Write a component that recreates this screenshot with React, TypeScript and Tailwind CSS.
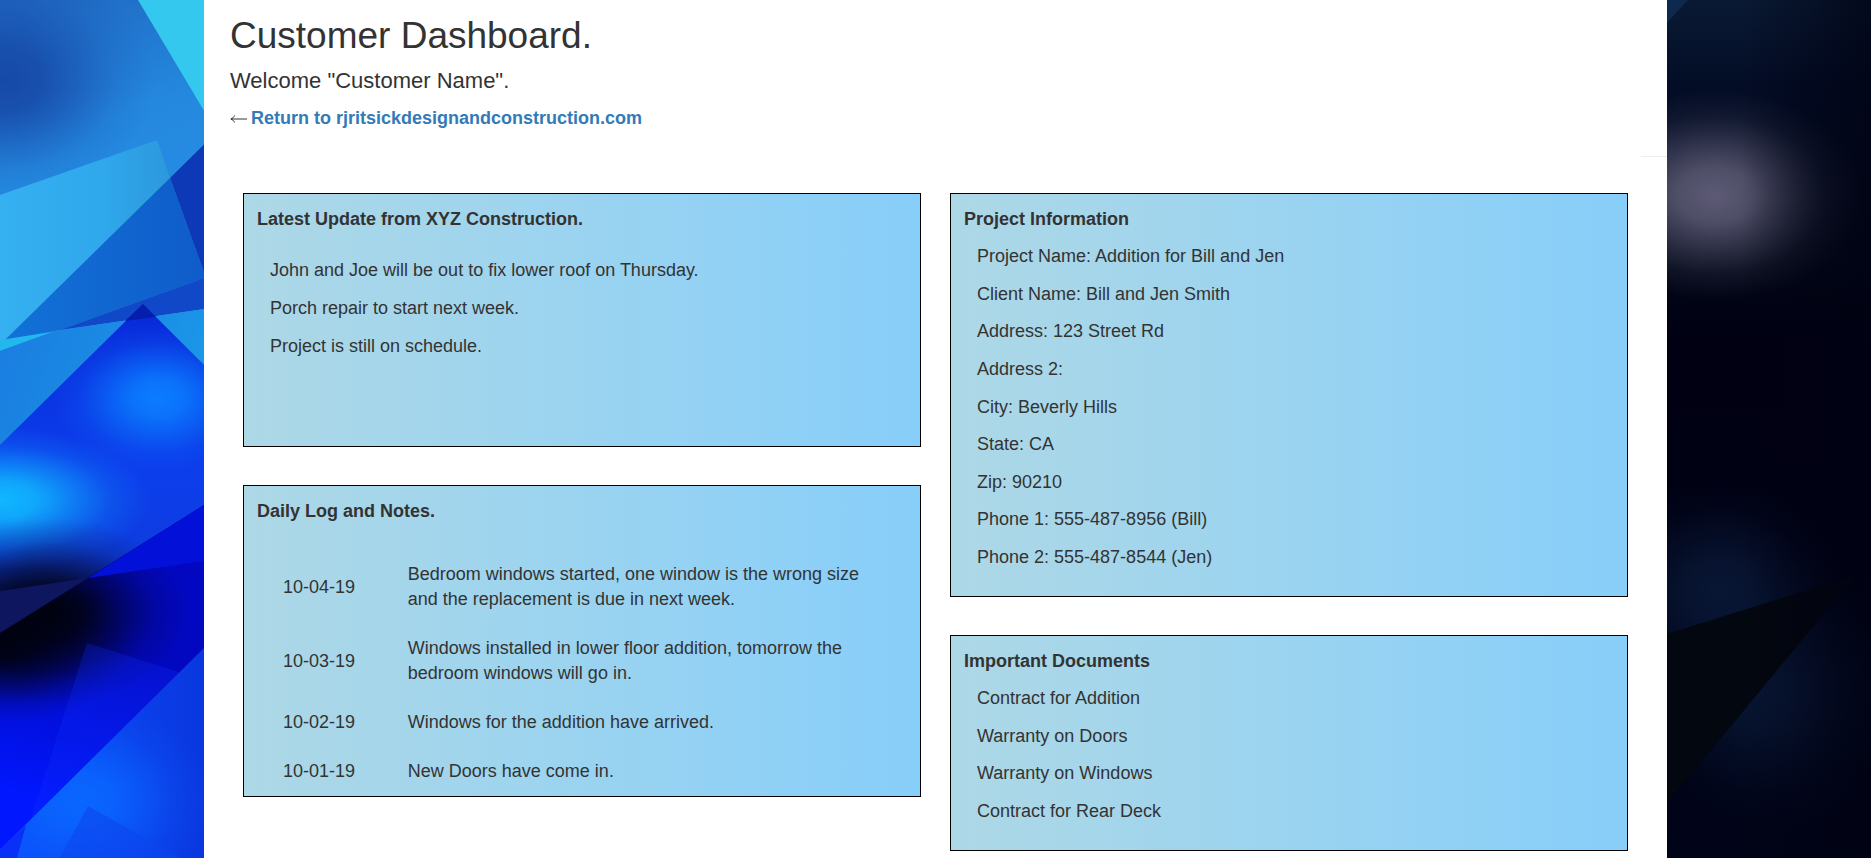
import type { ReactNode } from "react";

const updates = [
  "John and Joe will be out to fix lower roof on Thursday.",
  "Porch repair to start next week.",
  "Project is still on schedule.",
];

const dailyLog = [
  {
    date: "10-04-19",
    note: "Bedroom windows started, one window is the wrong size and the replacement is due in next week.",
  },
  {
    date: "10-03-19",
    note: "Windows installed in lower floor addition, tomorrow the bedroom windows will go in.",
  },
  { date: "10-02-19", note: "Windows for the addition have arrived." },
  { date: "10-01-19", note: "New Doors have come in." },
];

const projectInfo = [
  "Project Name: Addition for Bill and Jen",
  "Client Name: Bill and Jen Smith",
  "Address: 123 Street Rd",
  "Address 2:",
  "City: Beverly Hills",
  "State: CA",
  "Zip: 90210",
  "Phone 1: 555-487-8956 (Bill)",
  "Phone 2: 555-487-8544 (Jen)",
];

const documents = [
  "Contract for Addition",
  "Warranty on Doors",
  "Warranty on Windows",
  "Contract for Rear Deck",
];

// Radial glow stops shared by the backdrop
const Glow = ({ id, color }: { id: string; color: string }) => (
  <radialGradient id={id}>
    <stop offset="0" stopColor={color} />
    <stop offset="0.25" stopColor={color} stopOpacity="0.86" />
    <stop offset="0.5" stopColor={color} stopOpacity="0.5" />
    <stop offset="0.75" stopColor={color} stopOpacity="0.16" />
    <stop offset="1" stopColor={color} stopOpacity="0" />
  </radialGradient>
);

const Backdrop = () => (
  <svg
    className="absolute inset-0 h-full w-full"
    viewBox="0 0 1871 858"
    preserveAspectRatio="none"
    aria-hidden="true"
  >
    <defs>
      <Glow id="navy" color="#1749a8" />
      <Glow id="sky" color="#0b7cff" />
      <Glow id="cyan" color="#10b8ff" />
      <Glow id="black" color="#00020f" />
      <Glow id="bright" color="#0a66ff" />
      <Glow id="grey" color="#5c5a74" />
      <Glow id="midnight" color="#081634" />
      <linearGradient id="top" x1="0" y1="0" x2="0.3" y2="1">
        <stop offset="0" stopColor="#1f66c0" />
        <stop offset="0.4" stopColor="#2488de" />
        <stop offset="1" stopColor="#2892ea" />
      </linearGradient>
      <linearGradient id="pane" x1="0" y1="0" x2="1" y2="0">
        <stop offset="0" stopColor="#35b0f0" />
        <stop offset="0.6" stopColor="#30a8ec" />
        <stop offset="1" stopColor="#2c98dc" />
      </linearGradient>
      <linearGradient id="mid" x1="0" y1="0" x2="1" y2="0">
        <stop offset="0" stopColor="#1272d6" />
        <stop offset="1" stopColor="#0f5cca" />
      </linearGradient>
      <linearGradient id="shard" x1="0" y1="0" x2="1" y2="0.2">
        <stop offset="0" stopColor="#1a7ce0" />
        <stop offset="1" stopColor="#1ba0ea" />
      </linearGradient>
      <linearGradient id="royal" x1="0" y1="0" x2="0" y2="1">
        <stop offset="0" stopColor="#0828d8" />
        <stop offset="0.5" stopColor="#0c3eec" />
        <stop offset="0.75" stopColor="#0e3ce0" />
        <stop offset="1" stopColor="#0e1f96" />
      </linearGradient>
      <linearGradient id="deep" x1="0.2" y1="0" x2="0" y2="1">
        <stop offset="0" stopColor="#0208c4" />
        <stop offset="0.45" stopColor="#0208c0" />
        <stop offset="0.85" stopColor="#0118ff" />
      </linearGradient>
      <linearGradient id="corner" x1="0" y1="0" x2="1" y2="0">
        <stop offset="0" stopColor="#0a50ff" />
        <stop offset="0.66" stopColor="#0a38e0" />
        <stop offset="1" stopColor="#0a34dc" />
      </linearGradient>
      <linearGradient id="night" x1="0" y1="0" x2="0" y2="1">
        <stop offset="0" stopColor="#0a1a34" />
        <stop offset="0.1" stopColor="#030d26" />
        <stop offset="0.3" stopColor="#020818" />
        <stop offset="0.4" stopColor="#000012" />
        <stop offset="1" stopColor="#000418" />
      </linearGradient>
      <linearGradient id="fade" x1="0" y1="0" x2="1" y2="0">
        <stop offset="0" stopColor="#000212" stopOpacity="0" />
        <stop offset="1" stopColor="#000212" stopOpacity="0.7" />
      </linearGradient>
      <clipPath id="leftBand">
        <rect width="300" height="858" />
      </clipPath>
      <clipPath id="royalClip">
        <polygon points="0,445 143,304 204,365 300,461 300,445 0,633" />
      </clipPath>
      <clipPath id="cornerClip">
        <polygon points="0,850 204,648 300,553 300,858 0,858" />
      </clipPath>
    </defs>

    {/* Left side */}
    <g clipPath="url(#leftBand)">
      <rect width="300" height="360" fill="url(#top)" />
      <ellipse cx="5" cy="80" rx="150" ry="120" fill="url(#navy)" />
      <polygon points="138,0 300,0 300,272" fill="#35c8ee" />
      <polygon points="0,195 157,140 170,178 5,340 0,340" fill="url(#pane)" />
      <polygon points="170,178 300,50 300,540" fill="#0d38b6" />
      <polygon points="170,178 204,272 204,278 60,330 5,340" fill="url(#mid)" />
      <polygon points="204,278 300,243 300,295 60,330" fill="#1148c8" />
      <polygon points="0,340 52,332 0,351" fill="#22b8ee" />
      <polygon points="0,351 55,331 204,309 300,295 300,460 0,460" fill="url(#shard)" />
      <g clipPath="url(#royalClip)">
        <rect y="300" width="300" height="340" fill="url(#royal)" />
        <ellipse cx="158" cy="398" rx="105" ry="75" fill="url(#sky)" />
        <ellipse cx="0" cy="500" rx="150" ry="72" fill="url(#cyan)" />
      </g>
      <polygon points="143,304 125,321 156,317" fill="#041eae" />
      <polygon points="0,633 204,505 300,445 300,858 0,858" fill="url(#deep)" />
      <ellipse cx="50" cy="612" rx="140" ry="95" fill="url(#black)" />
      <ellipse cx="0" cy="640" rx="130" ry="85" fill="url(#black)" />
      <polygon points="88,578 204,505 204,561" fill="#0210d8" />
      <polygon points="0,591 88,578 0,633" fill="#0d165e" />
      <polygon points="87,643 204,680 204,858 18,858" fill="#1030ff" opacity="0.25" />
      <g clipPath="url(#cornerClip)">
        <rect y="553" width="300" height="305" fill="url(#corner)" />
        <ellipse cx="80" cy="800" rx="130" ry="100" fill="url(#bright)" />
        <polygon points="0,850 26,825 17,858 0,858" fill="#0a30f8" />
        <polygon points="88,806 180,858 60,858" fill="#0c46ee" opacity="0.6" />
      </g>
    </g>

    {/* Right side */}
    <rect x="1600" width="271" height="858" fill="url(#night)" />
    <polygon points="1600,0 1688,0 1600,95" fill="#0f284e" />
    <ellipse cx="1715" cy="195" rx="150" ry="105" fill="url(#grey)" />
    <ellipse cx="1720" cy="590" rx="130" ry="110" fill="url(#midnight)" />
    <ellipse cx="1775" cy="690" rx="150" ry="140" fill="url(#midnight)" />
    <polygon points="1600,654 1667,634 1856,575 1667,803 1600,880" fill="#03070f" />
    <rect x="1740" width="131" height="858" fill="url(#fade)" />
  </svg>
);

const Card = ({
  title,
  className = "",
  children,
}: {
  title: string;
  className?: string;
  children: ReactNode;
}) => (
  <section
    className={`flex flex-col border border-black bg-linear-to-r from-[#add8e6] to-[#87cefa] px-[13px] pt-[13px] ${className}`}
  >
    <h3 className="font-bold">{title}</h3>
    {children}
  </section>
);

const App = () => {
  return (
    <div className="relative min-h-screen bg-[#000418] font-['Liberation_Sans',Arial,sans-serif] text-[18px] leading-[25px] text-[#333]">
      <Backdrop />

      <main className="relative mx-[204px] min-h-screen bg-white">
        <header className="px-[26px] pt-4">
          <h1 className="text-[37px] leading-[40px]">Customer Dashboard.</h1>
          <h2 className="mt-3 text-[22px] leading-[25px]">Welcome "Customer Name".</h2>
          <p className="mt-[13px] flex items-center gap-1">
            <svg className="h-2 w-[17px]" viewBox="0 0 17 8" fill="none" stroke="#333" aria-hidden="true">
              <path d="M1 4H17M4.5 0.5C3.8 2.2 2.6 3.4 0.8 4C2.6 4.6 3.8 5.8 4.5 7.5" />
            </svg>
            <a href="#" className="font-bold text-[#337ab7] hover:underline">
              Return to rjritsickdesignandconstruction.com
            </a>
          </p>
        </header>

        <hr className="mt-[25px] ml-auto w-[26px] border-[#eee]" />

        <div className="mx-[39px] mt-9 grid grid-cols-2 items-start gap-[29px]">
          {/* Left column */}
          <div className="flex flex-col gap-[38px]">
            <Card title="Latest Update from XYZ Construction." className="min-h-[254px]">
              <ul className="mt-[26px] flex flex-col gap-[13px] px-[13px]">
                {updates.map((item) => (
                  <li key={item}>{item}</li>
                ))}
              </ul>
            </Card>

            <Card title="Daily Log and Notes.">
              <div className="mt-[26px] px-[13px]">
                <table className="w-full table-fixed">
                  <tbody>
                    {dailyLog.map((entry) => (
                      <tr key={entry.date}>
                        <td className="w-1/5 px-[13px] py-3">{entry.date}</td>
                        <td className="px-[13px] py-3">{entry.note}</td>
                      </tr>
                    ))}
                  </tbody>
                </table>
              </div>
            </Card>
          </div>

          {/* Right column */}
          <div className="flex flex-col gap-[38px]">
            <Card title="Project Information" className="min-h-[404px] pb-[26px]">
              <ul className="mt-3 flex flex-1 flex-col justify-between px-[13px]">
                {projectInfo.map((item) => (
                  <li key={item}>{item}</li>
                ))}
              </ul>
            </Card>

            <Card title="Important Documents" className="min-h-[216px] pb-[26px]">
              <ul className="mt-3 flex flex-1 flex-col justify-between px-[13px]">
                {documents.map((item) => (
                  <li key={item}>{item}</li>
                ))}
              </ul>
            </Card>
          </div>
        </div>
      </main>
    </div>
  );
};

export default App;
